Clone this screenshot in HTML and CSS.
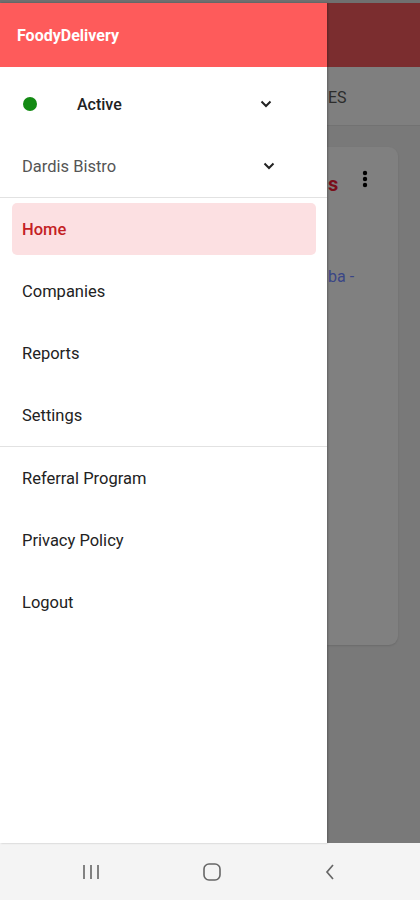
FILE: index.html
```html
<!DOCTYPE html>
<html lang="en">
<head>
  <meta charset="UTF-8" />
  <title>FoodyDelivery</title>
  <link rel="stylesheet" href="styles.css">
</head>
<body>

<div class="statusbar"></div>

<div class="screen">
  <aside class="drawer">
    <header class="drawer-head">FoodyDelivery</header>

    <div class="picker status-pick">
      <span class="dot"></span>
      <span class="pick-label">Active</span>
      <svg class="chev" width="12" height="8" viewBox="0 0 12 8"><path d="M1.5 1.5 L6 6 L10.5 1.5" fill="none" stroke="#222" stroke-width="2"/></svg>
    </div>

    <div class="picker company-pick">
      <span class="pick-label">Dardis Bistro</span>
      <svg class="chev" width="12" height="8" viewBox="0 0 12 8"><path d="M1.5 1.5 L6 6 L10.5 1.5" fill="none" stroke="#222" stroke-width="2"/></svg>
    </div>

    <nav class="menu">
      <a class="item active">Home</a>
      <a class="item">Companies</a>
      <a class="item">Reports</a>
      <a class="item">Settings</a>
    </nav>

    <nav class="menu">
      <a class="item">Referral Program</a>
      <a class="item">Privacy Policy</a>
      <a class="item">Logout</a>
    </nav>
  </aside>

  <!-- app behind the drawer, dimmed by the scrim -->
  <div class="behind">
    <div class="behind-head"></div>
    <div class="tabs"><span class="tab">ES</span></div>
    <div class="content">
      <div class="card">
        <div class="card-top">
          <span class="card-title">s</span>
          <svg class="kebab" width="6" height="18" viewBox="0 0 6 18"><circle cx="3" cy="3" r="2.2" fill="#000"/><circle cx="3" cy="9" r="2.2" fill="#000"/><circle cx="3" cy="15" r="2.2" fill="#000"/></svg>
        </div>
        <div class="card-line"><span class="addr">ba -</span></div>
      </div>
    </div>
  </div>
</div>

<div class="navbar">
  <svg width="18" height="16" viewBox="0 0 18 16"><path d="M2 1v14M9 1v14M16 1v14" stroke="#666" stroke-width="1.6" fill="none"/></svg>
  <svg width="20" height="20" viewBox="0 0 20 20"><rect x="2" y="2" width="16" height="16" rx="5" fill="none" stroke="#666" stroke-width="1.6"/></svg>
  <svg width="12" height="18" viewBox="0 0 12 18"><path d="M9 2 L3 9 L9 16" fill="none" stroke="#666" stroke-width="1.7"/></svg>
</div>

</body>
</html>
```

FILE: styles.css
```css
html, body { margin: 0; padding: 0; }
body { width: 420px; height: 900px; overflow: hidden; font-family: Roboto, 'Noto Sans', sans-serif; background: #fff; display: flex; flex-direction: column; }

.statusbar { height: 3px; background: #707070; }

.screen { flex: 1; display: flex; min-height: 0; }

.drawer { width: 327px; flex-shrink: 0; background: #fff; display: flex; flex-direction: column; box-shadow: 1px 0 2px rgba(0,0,0,0.25); z-index: 1; }
.drawer-head { height: 64px; background: #fe5b5b; color: #fff; font-size: 16px; font-weight: 700; padding-left: 17px; display: flex; align-items: center; }

.picker { display: flex; align-items: center; padding-right: 55px; }
.picker .chev { margin-left: auto; }
.status-pick { height: 74px; padding-left: 23px; }
.status-pick .pick-label { margin-left: 40px; font-size: 16px; font-weight: 500; color: #222; }
.dot { width: 14px; height: 14px; border-radius: 50%; background: #138a13; }
.company-pick { height: 50px; padding: 0 52px 6px 22px; border-bottom: 1px solid #e2e2e2; }
.company-pick .pick-label { font-size: 16.5px; color: #555; }

.menu { display: flex; flex-direction: column; }
.menu + .menu { border-top: 1px solid #e2e2e2; }
.item { height: 52px; margin: 5px 11px 5px 12px; padding-left: 10px; display: flex; align-items: center; font-size: 16.5px; color: #222; border-radius: 5px; }
.item.active { background: #fce0e2; color: #c41f25; font-weight: 500; }

.behind { flex: 1; overflow: hidden; background: #777; display: flex; flex-direction: column; }
.behind-head { height: 64px; background: #7b2d2f; flex-shrink: 0; }
.tabs { height: 58px; background: #7f7f7f; border-bottom: 1px solid #727272; display: flex; align-items: center; flex-shrink: 0; }
.tab { margin-left: 1px; font-size: 16px; color: #2c2c2c; padding-top: 2px; }
.content { flex: 1; background: #797979; padding: 21px 22px 0 0; }
.card { height: 498px; background: #808080; border-radius: 0 9px 9px 0; box-shadow: 0 1px 2px rgba(0,0,0,0.12); }
.card-top { height: 70px; display: flex; justify-content: space-between; align-items: center; padding: 0 30px 0 1px; }
.card-title { font-size: 20px; font-weight: 700; color: #7a0e1a; padding-top: 4px; }
.kebab { margin-top: -6px; }
.card-line { padding: 50px 0 0 1px; }
.addr { font-size: 16px; color: #3a4686; }

.navbar { height: 57px; background: #f4f4f4; display: flex; align-items: center; justify-content: space-between; padding: 0 84px 0 82px; flex-shrink: 0; }
```
